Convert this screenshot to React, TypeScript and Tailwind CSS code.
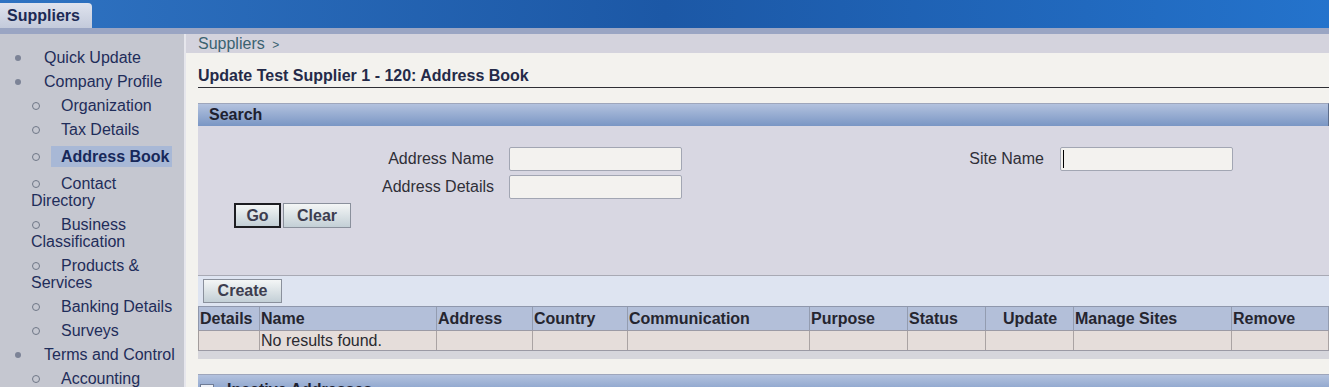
import { Plus } from 'lucide-react';

const font = { fontFamily: '"Liberation Sans", Arial, sans-serif' };

type NavItem = { label: string; level: 1 | 2; active?: boolean };

const nav: NavItem[] = [
  { label: 'Quick Update', level: 1 },
  { label: 'Company Profile', level: 1 },
  { label: 'Organization', level: 2 },
  { label: 'Tax Details', level: 2 },
  { label: 'Address Book', level: 2, active: true },
  { label: 'Contact Directory', level: 2 },
  { label: 'Business Classification', level: 2 },
  { label: 'Products & Services', level: 2 },
  { label: 'Banking Details', level: 2 },
  { label: 'Surveys', level: 2 },
  { label: 'Terms and Control', level: 1 },
  { label: 'Accounting', level: 2 },
];

const columns = [
  { label: 'Details', w: 'w-[61px]' },
  { label: 'Name', w: 'w-[177px]' },
  { label: 'Address', w: 'w-[96px]' },
  { label: 'Country', w: 'w-[95px]' },
  { label: 'Communication', w: 'w-[182px]' },
  { label: 'Purpose', w: 'w-[98px]' },
  { label: 'Status', w: 'w-[78px]' },
  { label: 'Update', w: 'w-[88px]' },
  { label: 'Manage Sites', w: 'w-[158px]' },
  { label: 'Remove', w: 'flex-1' },
];

function SideNav() {
  return (
    <div className="w-[184px] shrink-0 bg-[#c5c7d0] pt-[15px] pr-[4px] flex flex-col gap-[7px] text-[16px] leading-[17px] text-[#1f2d5a]">
      {nav.map((item) =>
        item.level === 1 ? (
          <div key={item.label} className="pl-[15px] flex items-center">
            <span className="inline-block w-[6px] h-[6px] rounded-full bg-[#7c8396]" />
            <span className="ml-[23px]">{item.label}</span>
          </div>
        ) : item.active ? (
          <div key={item.label} className="pl-[32px] my-[1px] flex items-center">
            <span className="inline-block w-[8px] h-[8px] rounded-full border border-[#6f7787]" />
            <span className="ml-[11px] bg-[#a8b8d6] pl-[10px] pr-[2px] py-[2px] w-[121px] font-bold text-[#17285a]">
              {item.label}
            </span>
          </div>
        ) : (
          <div key={item.label} className="pl-[31px]">
            <span className="inline-block w-[8px] h-[8px] ml-[1px] rounded-full border border-[#6f7787] align-middle -mt-[2px]" />
            <span className="ml-[21px]">{item.label}</span>
          </div>
        )
      )}
    </div>
  );
}

function Btn({ label, w, focused }: { label: string; w: string; focused?: boolean }) {
  return (
    <button
      className={`${w} h-[25px] flex items-center justify-center font-bold text-[16px] text-[#3d3d4f] bg-gradient-to-b from-[#f4f6f6] to-[#c3cfd6] ${
        focused ? 'border-2 border-[#1d1d22]' : 'border border-[#8a909c]'
      }`}
    >
      {label}
    </button>
  );
}

function Field({ caret }: { caret?: boolean }) {
  return (
    <div className="w-[173px] h-[24px] bg-[#f3f2ef] border border-[#a2a6b3] rounded-[2px] flex items-center pl-[2px]">
      {caret && <span className="w-[1px] h-[18px] bg-black" />}
    </div>
  );
}

export default function App() {
  return (
    <div className="w-[1329px] h-[387px] overflow-hidden bg-[#f3f2ee] flex flex-col" style={font}>
      {/* Banner */}
      <div className="h-[28px] shrink-0 flex items-end bg-gradient-to-r from-[#2f73c2] via-[#1c58a6] to-[#2473cc]">
        <div className="h-[25px] w-[92px] rounded-tr-[4px] bg-gradient-to-b from-[#dfe3ee] to-[#c3cadb] pl-[7px] flex items-center font-bold text-[16px] text-[#1c2a55]">
          Suppliers
        </div>
      </div>
      <div className="h-[6px] shrink-0 bg-[#9aa5c3]" />

      <div className="flex flex-1 min-h-0">
        <SideNav />

        <div className="flex-1 min-w-0 border-l-2 border-[#e6e6ec] flex flex-col">
          {/* Breadcrumb */}
          <div className="h-[19px] shrink-0 bg-[#d4d3dd] pl-[12px] text-[16px] leading-[19px] text-[#3b6270]">
            Suppliers <span className="text-[12px] ml-[3px]">&gt;</span>
          </div>

          {/* Title */}
          <div className="h-[35px] shrink-0 ml-[12px] border-b border-[#2e2e34] flex items-end pb-[2px]">
            <h1 className="font-bold text-[16px] leading-[18px] text-[#242a48]">
              Update Test Supplier 1 - 120: Address Book
            </h1>
          </div>

          <div className="ml-[12px] mt-[15px] flex flex-col">
            {/* Search header */}
            <div className="h-[23px] border-t border-[#9ea6bb] border-r border-r-[#5d6e8c] bg-gradient-to-b from-[#b3c2de] to-[#7a96c4] pl-[11px] flex items-center font-bold text-[16px] text-[#1e2130]">
              Search
            </div>

            {/* Search body */}
            <div className="h-[149px] bg-[#d8d7e2] pt-[21px] flex flex-col">
              <div className="flex">
                <div className="flex flex-col gap-[4px]">
                  <div className="flex items-center">
                    <span className="w-[296px] text-right text-[16px] text-[#2f2f38]">Address Name</span>
                    <span className="ml-[15px]"><Field /></span>
                  </div>
                  <div className="flex items-center">
                    <span className="w-[296px] text-right text-[16px] text-[#2f2f38]">Address Details</span>
                    <span className="ml-[15px]"><Field /></span>
                  </div>
                </div>
                <div className="flex items-start">
                  <div className="flex items-center">
                    <span className="w-[362px] text-right text-[16px] text-[#2f2f38]">Site Name</span>
                    <span className="ml-[16px]"><Field caret /></span>
                  </div>
                </div>
              </div>
              <div className="flex gap-[2px] ml-[36px] mt-[4px]">
                <Btn label="Go" w="w-[47px]" focused />
                <Btn label="Clear" w="w-[68px]" />
              </div>
            </div>

            {/* Create bar */}
            <div className="h-[31px] border-t border-[#a8a9b4] bg-[#dee4f1] pl-[5px] pt-[3px]">
              <button className="w-[79px] h-[24px] flex items-center justify-center font-bold text-[16px] text-[#3d3d4f] bg-gradient-to-b from-[#f4f6f6] to-[#c3cfd6] border border-[#8a909c]">
                Create
              </button>
            </div>

            {/* Table */}
            <div className="flex h-[24px] bg-[#b3bfd9] border-t border-[#8f97ac] border-l border-l-[#8f97ac]">
              {columns.map((c) => (
                <div
                  key={c.label}
                  className={`${c.w} shrink-0 border-r border-[#939cb0] pl-[1px] flex items-center font-bold text-[16px] text-[#25252f] whitespace-nowrap ${
                    c.label === 'Update' ? 'justify-center' : ''
                  }`}
                >
                  {c.label}
                </div>
              ))}
            </div>
            <div className="flex h-[21px] bg-[#e5ddda] border-t border-[#9b9aa5] border-b border-b-[#9b9aa5] border-l border-l-[#a29c9c]">
              {columns.map((c) => (
                <div
                  key={c.label}
                  className={`${c.w} shrink-0 border-r border-[#aaa3a3] flex items-center text-[16px] text-[#2a2a30] pl-[1px]`}
                >
                  {c.label === 'Name' ? 'No results found.' : ''}
                </div>
              ))}
            </div>
            <div className="h-[8px] bg-[#d6d6dc]" />
            <div className="h-[15px]" />

            {/* Inactive Addresses header */}
            <div className="h-[23px] border-t border-[#9ea6bb] bg-gradient-to-b from-[#b3c2de] to-[#7a96c4] pl-[2px] flex items-center font-bold text-[16px] text-[#1e2130]">
              <span className="w-[14px] h-[14px] border border-[#6f7c96] bg-[#eef1f7] flex items-center justify-center mt-[10px]">
                <Plus className="w-[10px] h-[10px] text-[#38476a]" strokeWidth={3} />
              </span>
              <span className="ml-[13px] mt-[8px]">Inactive Addresses</span>
            </div>
          </div>
        </div>
      </div>
    </div>
  );
}
